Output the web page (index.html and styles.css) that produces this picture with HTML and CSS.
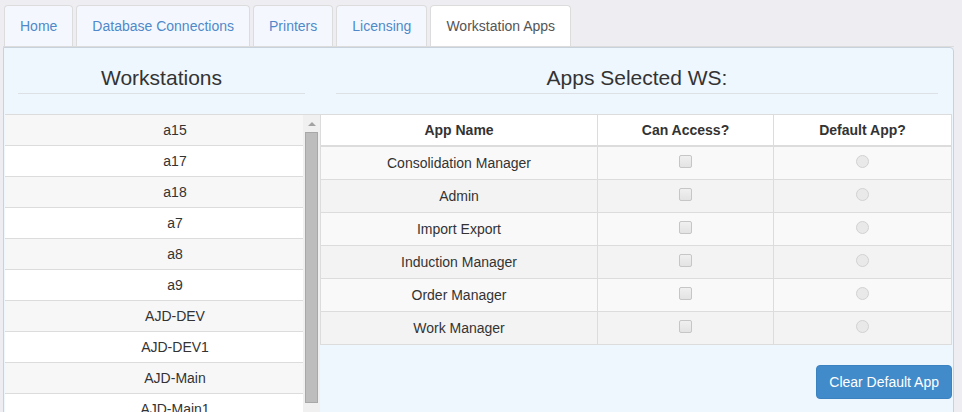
FILE: index.html
```html
<!DOCTYPE html>
<html lang="en">
<head>
<meta charset="utf-8">
<title>Workstation Apps</title>
<link rel="stylesheet" href="styles.css">
</head>
<body>
<div class="app">
  <ul class="tabs">
    <li class="tab"><a>Home</a></li>
    <li class="tab"><a>Database Connections</a></li>
    <li class="tab"><a>Printers</a></li>
    <li class="tab"><a>Licensing</a></li>
    <li class="tab active"><a>Workstation Apps</a></li>
  </ul>
  <div class="panel">
    <div class="col-left">
      <h3 class="heading heading-left">Workstations</h3>
      <div class="ws-box">
        <div class="ws-viewport">
          <ul class="ws-list">
            <li>a15</li>
            <li>a17</li>
            <li>a18</li>
            <li>a7</li>
            <li>a8</li>
            <li>a9</li>
            <li>AJD-DEV</li>
            <li>AJD-DEV1</li>
            <li>AJD-Main</li>
            <li>AJD-Main1</li>
            <li>AJD-Main2</li>
          </ul>
        </div>
        <div class="scrollbar">
          <div class="scroll-arrow"><span class="tri"></span></div>
          <div class="scroll-thumb"></div>
        </div>
      </div>
    </div>
    <div class="col-right">
      <h3 class="heading heading-right">Apps Selected WS:</h3>
      <table class="apps">
        <colgroup>
          <col class="c1">
          <col class="c2">
          <col class="c3">
        </colgroup>
        <thead>
          <tr><th>App Name</th><th>Can Access?</th><th>Default App?</th></tr>
        </thead>
        <tbody>
          <tr><td>Consolidation Manager</td><td><span class="chk"></span></td><td><span class="radio"></span></td></tr>
          <tr><td>Admin</td><td><span class="chk"></span></td><td><span class="radio"></span></td></tr>
          <tr><td>Import Export</td><td><span class="chk"></span></td><td><span class="radio"></span></td></tr>
          <tr><td>Induction Manager</td><td><span class="chk"></span></td><td><span class="radio"></span></td></tr>
          <tr><td>Order Manager</td><td><span class="chk"></span></td><td><span class="radio"></span></td></tr>
          <tr><td>Work Manager</td><td><span class="chk"></span></td><td><span class="radio"></span></td></tr>
        </tbody>
      </table>
      <div class="actions">
        <button class="btn" type="button">Clear Default App</button>
      </div>
    </div>
  </div>
</div>
</body>
</html>
```

FILE: styles.css
```css
* { box-sizing: border-box; }
html, body {
  margin: 0;
  padding: 0;
  overflow: hidden;
}
body {
  background: #eeedf2;
  font-family: "Liberation Sans", Arial, sans-serif;
  font-size: 14px;
  line-height: 20px;
  color: #333;
}
.app {
  width: 951px;
  margin-left: 3px;
  padding-top: 5px;
}
.tabs {
  list-style: none;
  margin: 0;
  padding: 0 0 0 1px;
  display: flex;
  border-bottom: 1px solid #dcdcdc;
}
.tab {
  margin-right: 3px;
  border: 1px solid #dcdcdc;
  border-bottom: none;
  border-radius: 4px 4px 0 0;
  background: #f4f8fe;
}
.tab a {
  display: block;
  padding: 10px 15px;
  color: #4f89c9;
}
.tab.active { background: #fff; }
.tab.active a { color: #555; }

.panel {
  display: grid;
  grid-template-columns: 316px 1fr;
  height: 420px;
  padding-right: 1px;
  background: #eef6fe;
  border: 1px solid #c8d2dd;
  border-radius: 0 4px 4px 4px;
}
.col-left { padding-left: 1px; }
.heading {
  margin: 18px 15px 20px;
  padding-bottom: 4px;
  font-size: 21px;
  line-height: 23px;
  font-weight: normal;
  text-align: center;
  color: #333;
  border-bottom: 1px solid #dde1e6;
}
.heading-left { margin-left: 13px; margin-right: 15px; }
.heading-right { margin-left: 16px; margin-right: 14px; }

.ws-box {
  display: flex;
  border-top: 1px solid #dcdcdc;
}
.ws-viewport {
  width: 298px;
  overflow: hidden;
}
.ws-list {
  list-style: none;
  margin: 0;
  padding: 0;
  width: 340px;
}
.ws-list li {
  padding: 5px;
  text-align: center;
  border-bottom: 1px solid #dcdcdc;
  background: #fff;
}
.ws-list li:nth-child(odd) { background: #f7f7f7; }

.scrollbar {
  width: 17px;
  background: #f0f0f0;
  display: flex;
  flex-direction: column;
  align-items: center;
}
.scroll-arrow {
  height: 17px;
  width: 17px;
  display: flex;
  align-items: center;
  justify-content: center;
}
.tri {
  width: 0;
  height: 0;
  border-left: 4px solid transparent;
  border-right: 4px solid transparent;
  border-bottom: 4px solid #a3a3a3;
}
.scroll-thumb {
  width: 13px;
  height: 271px;
  background: #bdbdbd;
  border: 1px solid #a8a8a8;
}

.apps {
  width: 632px;
  border-collapse: collapse;
  table-layout: fixed;
}
.apps .c1 { width: 277px; }
.apps .c2 { width: 176px; }
.apps th, .apps td {
  border: 1px solid #dcdcdc;
  text-align: center;
  line-height: 20px;
}
.apps th {
  background: #fff;
  padding: 5px 8px;
  border-bottom: 2px solid #dcdcdc;
  font-weight: bold;
}
.apps td { padding: 6px 8px; }
.apps tbody tr:nth-child(odd) td { background: #f9f9f9; }
.apps tbody tr:nth-child(even) td { background: #f3f3f3; }

.chk {
  display: inline-block;
  vertical-align: top;
  margin-top: 2px;
  width: 13px;
  height: 13px;
  border: 1px solid #c6c6c6;
  border-radius: 2px;
  background: linear-gradient(#f0f0f0, #e3e3e3);
}
.radio {
  display: inline-block;
  vertical-align: top;
  margin-top: 2px;
  width: 13px;
  height: 13px;
  border: 1px solid #d2d2d2;
  border-radius: 50%;
  background: #e9e9e9;
}

.actions {
  display: flex;
  justify-content: flex-end;
  margin-top: 20px;
}
.btn {
  font-family: "Liberation Sans", Arial, sans-serif;
  font-size: 14px;
  line-height: 20px;
  padding: 6px 12px;
  color: #fff;
  background: #428bca;
  border: 1px solid #3b82c1;
  border-radius: 4px;
}
```
